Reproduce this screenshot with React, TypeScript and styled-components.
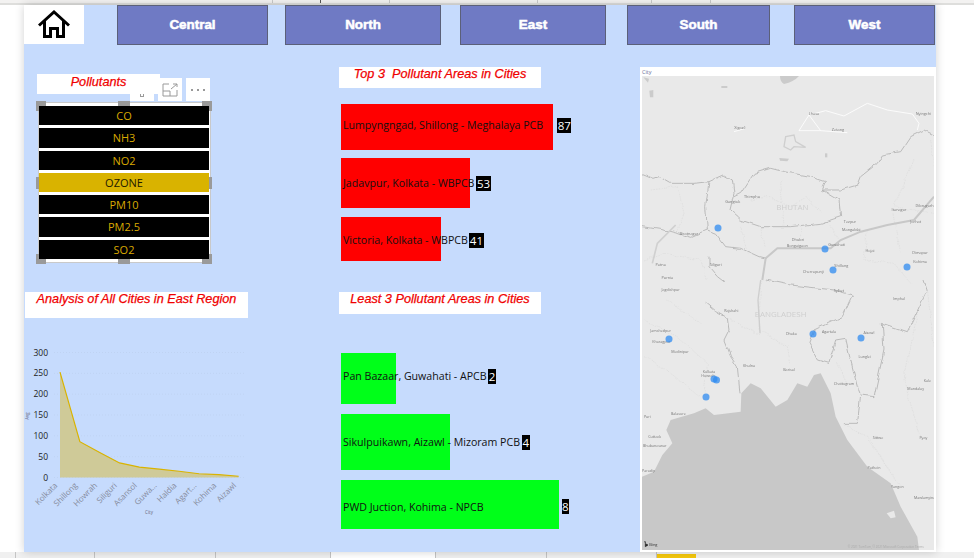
import React from "react";
import styled, { createGlobalStyle } from "styled-components";

const Global = createGlobalStyle`
  html, body { margin: 0; padding: 0; width: 974px; height: 558px; overflow: hidden; background: #fff; }
  #root { width: 974px; height: 558px; }
`;

const Shell = styled.div`
  width: 974px;
  height: 558px;
  display: flex;
  flex-direction: column;
  font-family: "Liberation Sans", Arial, sans-serif;
`;
const TopStrip = styled.div`
  height: 3px;
  flex: none;
  background: #f3f2f1;
  border-bottom: 2px solid #dededc;
  display: flex;
`;
const TopTick = styled.span<{ $w: number; $dark?: boolean }>`
  box-sizing: border-box;
  width: ${(p) => p.$w}px;
  height: 3px;
  border-right: 1px solid ${(p) => (p.$dark ? "#555" : "#c9c9c9")};
`;
const Middle = styled.div`
  height: 547px;
  flex: none;
  padding-left: 24px;
  display: flex;
`;
const Canvas = styled.main`
  position: relative;
  width: 912px;
  height: 547px;
  background: #c6dbfd;
  box-shadow: 0 0 9px rgba(0, 0, 0, 0.18);
  display: flex;
  flex-direction: column;
`;
const Nav = styled.nav`
  height: 40px;
  flex: none;
  display: flex;
  align-items: stretch;
`;
const HomeButton = styled.div`
  width: 60px;
  height: 39px;
  background: #fff;
  display: flex;
  align-items: center;
  justify-content: center;
`;
const RegionButton = styled.div<{ $w: number; $gap: number }>`
  box-sizing: border-box;
  width: ${(p) => p.$w}px;
  margin-left: ${(p) => p.$gap}px;
  background: #6f7ac4;
  border: 1px solid #5b6079;
  color: #fff;
  font-size: 13.4px;
  font-weight: 700;
  -webkit-text-stroke: 0.55px #fff;
  display: flex;
  align-items: center;
  justify-content: center;
  padding-bottom: 2px;
`;
const Content = styled.div`
  flex: 1;
  min-height: 0;
  display: flex;
`;
const LeftColumn = styled.section`
  width: 315px;
  flex: none;
  display: flex;
  flex-direction: column;
`;
const MiddleColumn = styled.section`
  width: 301px;
  flex: none;
  display: flex;
  flex-direction: column;
  padding-top: 22px;
`;
const Title = styled.div<{ $w: number; $h: number; $ml: number; $pt: number }>`
  box-sizing: border-box;
  position: relative;
  z-index: 2;
  flex: none;
  width: ${(p) => p.$w}px;
  height: ${(p) => p.$h}px;
  margin-left: ${(p) => p.$ml}px;
  padding-top: ${(p) => p.$pt}px;
  background: #fff;
  color: #f00000;
  font-size: 12.7px;
  line-height: 14px;
  font-style: italic;
  font-weight: 400;
  -webkit-text-stroke: 0.25px #f00000;
  text-align: center;
  white-space: pre;
`;
const SlicerArea = styled.div`
  position: relative;
  padding-top: 29px;
  display: flex;
  flex-direction: column;
`;
const Toolbar = styled.div`
  position: absolute;
  top: 33px;
  left: 106px;
  display: flex;
  gap: 4px;
  z-index: 1;
`;
const ToolButton = styled.div`
  width: 24px;
  height: 23px;
  background: #fff;
  display: flex;
  align-items: center;
  justify-content: center;
  color: #8d8d8d;
`;
const PinGlyph = styled.span`
  box-sizing: border-box;
  width: 4px;
  height: 4px;
  margin-top: 11px;
  border: 1px solid #9a9a9a;
  border-top: none;
`;
const Slicer = styled.div`
  position: relative;
  box-sizing: border-box;
  width: 173px;
  height: 161px;
  margin: 8px 0 0 14px;
  padding: 3px 1px 3px 0;
  background: #fff;
  border: 1px solid #c9c9c9;
  display: flex;
  flex-direction: column;
  gap: 3px;
`;
const SlicerItem = styled.div<{ $active?: boolean }>`
  position: relative;
  z-index: 1;
  height: 19.6px;
  background: ${(p) => (p.$active ? "#d9b300" : "#000")};
  color: ${(p) => (p.$active ? "#1d1a00" : "#d9a900")};
  font-family: "Open Sans", sans-serif;
  font-size: 11px;
  line-height: 19px;
  text-align: center;
`;
const Handle = styled.span<{ $x: string; $y: string; $w: number; $h: number }>`
  position: absolute;
  background: #9a9a9a;
  width: ${(p) => p.$w}px;
  height: ${(p) => p.$h}px;
  ${(p) => p.$x}
  ${(p) => p.$y}
`;
const ChartWrap = styled.div`
  margin-top: 3px;
  flex: none;
  display: block;
  line-height: 0;
`;
const BarList = styled.div<{ $mt: number }>`
  margin: ${(p) => p.$mt}px 0 0 2px;
  display: flex;
  flex-direction: column;
`;
const BarRow = styled.div<{ $h: number; $mb?: number; $shift: number }>`
  box-sizing: border-box;
  position: relative;
  height: ${(p) => p.$h}px;
  margin-bottom: ${(p) => p.$mb ?? 0}px;
  padding-top: ${(p) => Math.max(p.$shift, 0) * 2}px;
  padding-bottom: ${(p) => Math.max(-p.$shift, 0) * 2}px;
  display: flex;
  align-items: center;
`;
const BarFill = styled.div<{ $color: string }>`
  position: absolute;
  left: 0;
  top: 0;
  bottom: 0;
  background: ${(p) => p.$color};
`;
const BarLabel = styled.span`
  position: relative;
  margin-left: 2px;
  color: #111;
  font-family: "Open Sans", sans-serif;
  font-size: 10.62px;
  white-space: nowrap;
`;
const BarValue = styled.span<{ $ml: number }>`
  position: relative;
  margin-left: ${(p) => p.$ml}px;
  background: #000;
  color: #fff;
  padding: 0 0.5px;
  font-family: "Open Sans", sans-serif;
  font-size: 11.5px;
  line-height: 15px;
  height: 15px;
`;
const MapPanel = styled.section`
  box-sizing: border-box;
  width: 296px;
  height: 485px;
  margin-top: 22px;
  flex: none;
  background: #fff;
  padding: 2px;
  display: flex;
  flex-direction: column;
`;
const MapTitle = styled.div`
  height: 7px;
  flex: none;
  font-family: "Open Sans", sans-serif;
  font-size: 5.5px;
  line-height: 6px;
  color: #6a6f9a;
`;
const MapArea = styled.div`
  flex: 1;
  min-height: 0;
  line-height: 0;
`;
const BottomStrip = styled.div`
  height: 6px;
  flex: none;
  background: #f0f0f0;
  display: flex;
`;
const Tab = styled.div<{ $w: number; $active?: boolean }>`
  box-sizing: border-box;
  width: ${(p) => p.$w}px;
  height: 6px;
  border-right: 1px solid #c4c4c4;
  background: ${(p) => (p.$active ? "#fff" : "transparent")};
`;
const GoldTab = styled.div`
  width: 39px;
  height: 4px;
  margin-top: 2px;
  background: #f4c70d;
`;

const Home = () => (
  <svg width="32" height="29" viewBox="0 0 32 29" fill="none" stroke="#000" strokeWidth="3" strokeLinejoin="miter">
    <path d="M1 15.5 L16 2 L31 15.5" />
    <path d="M6.5 11 V26.5 H12.5 V18.5 H19.5 V26.5 H25.5 V11" />
  </svg>
);

const Kebab = () => (
  <svg width="16" height="4" viewBox="0 0 16 4" fill="#777">
    <circle cx="2" cy="2" r="1" />
    <circle cx="8" cy="2" r="1" />
    <circle cx="14" cy="2" r="1" />
  </svg>
);
const Focus = () => (
  <svg width="16" height="14" viewBox="0 0 16 14" fill="none" stroke="#9a9a9a" strokeWidth="1">
    <path d="M7 1 H1 V13 H15 V7" />
    <path d="M1 8 H8 V13" />
    <path d="M9 6 L15 1 M11 1 H15 V4" />
  </svg>
);

const cities = ["Kolkata", "Shillong", "Howrah", "Siliguri", "Asansol", "Guwa...", "Haldia", "Agart...", "Kohima", "Aizawl"];
const values = [253, 86, 60, 35, 25, 20, 15, 9, 7, 3];

const AreaChart = () => {
  const x = (i: number) => 36 + i * 19.85;
  const y = (v: number) => 156.5 - (v / 300) * 125;
  const line = values.map((v, i) => `${x(i)},${y(v)}`).join(" ");
  return (
    <svg width="240" height="197" viewBox="0 0 240 197">
      {[0, 50, 100, 150, 200, 250, 300].map((t) => (
        <g key={t}>
          <line x1="30" x2="222" y1={y(t)} y2={y(t)} stroke="#bfd3f3" strokeWidth="1" strokeDasharray="1 2" />
          <text x="24" y={y(t) + 3} textAnchor="end" fontSize="8.5" fill="#222" fontFamily="Open Sans, sans-serif">
            {t}
          </text>
        </g>
      ))}
      <polygon points={`${x(0)},${y(0)} ${line} ${x(9)},${y(0)}`} fill="#cfca98" />
      <polyline points={line} fill="none" stroke="#d9b300" strokeWidth="1.2" />
      {cities.map((c, i) => (
        <text
          key={c}
          x={x(i) - 2}
          y={165}
          textAnchor="end"
          fontSize="8"
          fill="#858a9b"
          fontFamily="Open Sans, sans-serif"
          transform={`rotate(-45 ${x(i) - 2} 165)`}
        >
          {c}
        </text>
      ))}
      <text x="125" y="193" textAnchor="middle" fontSize="4.5" fill="#667" fontFamily="Open Sans, sans-serif">
        City
      </text>
      <text x="5" y="95" textAnchor="middle" fontSize="4.5" fill="#667" fontFamily="Open Sans, sans-serif" transform="rotate(-90 5 95)">
        Avg
      </text>
    </svg>
  );
};

const labelsTop: [number, number, string][] = [
  [540, 344, "Lhasa"], [318, 388, "Xigazê"], [612, 393, "Zetang"], [868, 345, "Nyingchi"], [296, 608, "Gangtok"],
  [354, 593, "Thimphu"], [165, 705, "Biratnagar"], [795, 634, "Itanagar"], [872, 620, "Dibrugarh"], [845, 670, "Jorhat"],
  [648, 670, "Tezpur"], [652, 692, "Mangaldai"], [492, 724, "Dhubri"], [490, 740, "Bongaigaon"], [608, 738, "Guwahati"],
  [708, 756, "Hojai"], [622, 800, "Shillong"], [538, 820, "Cherrapunji"], [858, 763, "Dimapur"], [858, 790, "Kohima"],
  [80, 797, "Patna"], [245, 798, "Siliguri"], [100, 836, "Purnia"],
];
const labelsBottom: [number, number, string][] = [
  [110, 34, "Jagdishpur"], [292, 95, "Rajshahi"], [615, 36, "Sylhet"], [795, 61, "Imphal"], [80, 157, "Jamshedpur"],
  [82, 190, "Kharagpur"], [138, 220, "Medinipur"], [225, 278, "Kolkata"], [222, 291, "Howrah"], [345, 262, "Khulna"],
  [472, 165, "Dhaka"], [465, 274, "Barisal"], [585, 160, "Agartala"], [705, 163, "Aizawl"], [692, 235, "Lunglei"],
  [630, 315, "Chattogram"], [845, 331, "Mandalay"], [880, 305, "Kale"], [40, 413, "Puri"], [133, 405, "Balasore"],
  [62, 473, "Cuttack"], [62, 500, "Bhubaneswar"], [732, 476, "Sittwe"], [868, 476, "Pyay"], [720, 568, "Pathein"],
  [790, 624, "Yangon"], [872, 656, "Mawlamyine"], [44, 577, "Paradip"],
];

const MapDrawing = () => (
  <svg width="292" height="474" viewBox="642 76 292 474" style={{ display: "block" }}>
    <defs>
      <filter id="soft" x="0" y="0" width="100%" height="100%">
        <feGaussianBlur stdDeviation="0.45" />
      </filter>
      <filter id="wiggle" x="-5%" y="-5%" width="110%" height="110%">
        <feTurbulence type="fractalNoise" baseFrequency="0.035" numOctaves="2" seed="4" result="n" />
        <feDisplacementMap in="SourceGraphic" in2="n" scale="14" xChannelSelector="R" yChannelSelector="G" />
      </filter>
    </defs>
    <g filter="url(#soft)">
      <rect x="642" y="76" width="292" height="474" fill="#e9e9e9" />
      <g transform="translate(634 0) scale(0.33333)">
        <g fill="#cbcbcb">
          <path d="M438 228 H495 Q480 245 450 252 Q438 245 438 228 Z" />
          <path d="M46 272 L58 270 L58 292 L48 292 Z" />
          <path d="M262 258 H280 V264 H262 Z" />
          <path d="M28 232 L45 236 L42 248 Z" />
          <path d="M436 474 L465 476 L460 484 L438 482 Z" />
          <path d="M573 460 H580 V472 H573 Z" />
        </g>
        <path d="M455 410 L480 405 L485 425 L515 442 L480 440 L470 450 L450 440 Z" fill="none" stroke="#cfcfcf" strokeWidth="4" />
        <path d="M300 395 L335 385 M495 392 L525 345 L575 332 L630 348 L700 310 L760 330 L835 342 L855 370 L850 390 M525 345 L560 392 L495 392 M560 392 L640 398" fill="none" stroke="#fff" strokeWidth="2.5" />
        <g filter="url(#wiggle)">
          <g fill="none" stroke="#b2b2b2" strokeWidth="2.6">
            <path d="M24 520 L60 535 L75 530 L110 550 L180 550 L225 545 L270 525 L295 540 L300 580 L288 630 L320 660 L380 680 L470 680 L560 670 L620 650 L615 600 L565 570 L575 545 L530 530 L450 515 L410 505 L360 520 L320 580 L300 590" />
            <path d="M565 570 L620 570 L670 555 L680 530 L730 490 L745 465 L800 455 L830 410 L870 390 L900 405" />
            <path d="M225 545 L215 620 L220 690 L170 712 L130 700 L90 690 L24 680" />
            <path d="M220 690 L245 700 L275 740 L320 745 L375 770 L395 775" />
            <path d="M225 770 L225 800 L250 830 L270 845" />
          </g>
          <g fill="none" stroke="#d6d6d6" strokeWidth="1.4" strokeDasharray="5 3">
            <path d="M50 570 L130 560 L150 640 L130 700 M350 600 L400 590 L470 620 L520 590 L560 640 M440 540 L450 680 M500 680 L500 720 M590 670 L610 720 M700 690 L690 780 L780 790 L830 850 M780 640 L800 760 M840 480 L780 620 L900 640 M890 420 L900 500 M320 680 L340 760 M380 680 L390 740 M30 780 L90 760 L200 780 L220 840" />
          </g>
        </g>
        <path d="M900 590 L840 660 L760 675 L680 695 L620 720 L590 745 L500 745 L430 745 L395 775 L385 840" fill="none" stroke="#c8c8c8" strokeWidth="6" />
        <path d="M125 675 L70 730 L55 790" fill="none" stroke="#d0d0d0" strokeWidth="5" />
        {labelsTop.map(([x, y, t]) => (
          <text key={t} x={x} y={y} textAnchor="middle" fontSize="11.5" fill="#777" fontFamily="Open Sans, sans-serif">
            {t}
          </text>
        ))}
        <text x="475" y="630" textAnchor="middle" fontSize="24" fill="#cfcfcf" fontFamily="Open Sans, sans-serif">
          BHUTAN
        </text>
      </g>
      <g transform="translate(634 280) scale(0.33333)">
        <path d="M24 590 L60 575 L85 525 L115 490 L97 450 L110 420 L180 400 L215 385 L240 405 L320 395 L322 340 L350 310 L380 325 L425 380 L460 360 L490 310 L520 320 L540 285 L560 280 L590 340 L605 410 L640 480 L700 560 L770 610 L800 680 L850 770 L855 810 L24 810 Z" fill="#c8c8c8" />
        <path d="M758 700 L780 692 L785 712 L770 715 Z" fill="#e9e9e9" />
        <g filter="url(#wiggle)">
          <g fill="none" stroke="#b2b2b2" strokeWidth="2.6">
            <path d="M215 70 L245 95 L280 115 L285 150 L270 180 L290 230 L310 260 L318 340" />
            <path d="M395 0 L470 15 L600 30 L655 45 L625 110 L540 150 L525 190 L550 240 L585 250 L605 180 L635 175 L650 240 L670 320 L680 345 L670 430 L630 430" />
            <path d="M745 130 L750 210 L720 350 L680 345" />
            <path d="M745 130 L820 155 L880 30 L870 0" />
          </g>
          <g fill="none" stroke="#d6d6d6" strokeWidth="1.4" strokeDasharray="5 3">
            <path d="M380 0 L375 150 L460 200 L470 250 M280 115 L380 165 M610 250 L640 310 M30 120 L130 170 L220 250 L210 340 M30 230 L110 280 L200 350 M100 60 L200 130 M850 100 L810 300 L860 480 M700 480 L760 560 M625 430 L700 470 L800 620 M880 30 L900 200" />
          </g>
        </g>
        <path d="M380 0 L372 60 L378 160" fill="none" stroke="#cecece" strokeWidth="4" />
        {labelsBottom.map(([x, y, t]) => (
          <text key={t} x={x} y={y} textAnchor="middle" fontSize="11" fill="#777" fontFamily="Open Sans, sans-serif">
            {t}
          </text>
        ))}
        <text x="440" y="110" textAnchor="middle" fontSize="24" fill="#cfcfcf" fontFamily="Open Sans, sans-serif">
          BANGLADESH
        </text>
        <path d="M31 785 H34 V800 L42 795 L36 792" fill="#222" stroke="#222" strokeWidth="2" />
        <text x="46" y="797" fontSize="12" fill="#333" fontFamily="Open Sans, sans-serif">
          Bing
        </text>
        <text x="755" y="804" textAnchor="middle" fontSize="9" fill="#aaa" fontFamily="Open Sans, sans-serif">
          © 2021 TomTom, © 2021 Microsoft Corporation Terms
        </text>
      </g>
    </g>
    {[
      [718, 228], [825, 249], [833, 270], [907, 267], [669, 339], [714, 379], [716.5, 380], [706, 397], [813, 334], [861, 338],
    ].map(([cx, cy]) => (
      <circle key={`${cx}-${cy}`} cx={cx} cy={cy} r="3.5" fill="#2f8bf0" fillOpacity="0.75" />
    ))}
  </svg>
);

const pollutants = ["CO", "NH3", "NO2", "OZONE", "PM10", "PM2.5", "SO2"];

const regions: [string, number, number][] = [
  ["Central", 151, 33],
  ["North", 156, 17],
  ["East", 146, 19],
  ["South", 143, 21],
  ["West", 141, 24],
];

const top3 = [
  { label: "Lumpyngngad, Shillong - Meghalaya PCB", value: "87", w: 212, h: 46, ml: 14, mb: 8, shift: -2 },
  { label: "Jadavpur, Kolkata - WBPCB", value: "53", w: 129, h: 50, ml: 2, mb: 9, shift: 0 },
  { label: "Victoria, Kolkata - WBPCB", value: "41", w: 100, h: 44, ml: 1.5, mb: 0, shift: 1 },
];
const least3 = [
  { label: "Pan Bazaar, Guwahati - APCB", value: "2", w: 55, h: 51, ml: 1.5, mb: 10, shift: -2.5 },
  { label: "Sikulpuikawn, Aizawl - Mizoram PCB", value: "4", w: 109, h: 56, ml: 2, mb: 10, shift: 0 },
  { label: "PWD Juction, Kohima - NPCB", value: "8", w: 218, h: 49, ml: 78, mb: 0, shift: 2 },
];

const Bars = ({ items, color }: { items: typeof top3; color: string }) => (
  <>
    {items.map((b) => (
      <BarRow key={b.label} $h={b.h} $mb={b.mb} $shift={b.shift}>
        <BarFill $color={color} style={{ width: b.w }} />
        <BarLabel>{b.label}</BarLabel>
        <BarValue $ml={b.ml}>{b.value}</BarValue>
      </BarRow>
    ))}
  </>
);

export default function App() {
  return (
    <Shell>
      <Global />
      <TopStrip>
        <TopTick $w={273} />
        <TopTick $w={48} $dark />
        <TopTick $w={69} />
        <TopTick $w={148} />
        <TopTick $w={114} />
        <TopTick $w={59} />
      </TopStrip>
      <Middle>
        <Canvas>
          <Nav>
            <HomeButton>
              <Home />
            </HomeButton>
            {regions.map(([name, w, gap]) => (
              <RegionButton key={name} $w={w} $gap={gap}>
                {name}
              </RegionButton>
            ))}
          </Nav>
          <Content>
            <LeftColumn>
              <SlicerArea>
                <Title $w={123} $h={20} $ml={13} $pt={1}>
                  Pollutants
                </Title>
                <Toolbar>
                  <ToolButton>
                    <PinGlyph />
                  </ToolButton>
                  <ToolButton>
                    <Focus />
                  </ToolButton>
                  <ToolButton>
                    <Kebab />
                  </ToolButton>
                </Toolbar>
                <Slicer>
                  {pollutants.map((p) => (
                    <SlicerItem key={p} $active={p === "OZONE"}>
                      {p}
                    </SlicerItem>
                  ))}
                  <Handle $x="left:-3px;" $y="top:-2px;" $w={10} $h={10} />
                  <Handle $x="left:79px;" $y="top:-2px;" $w={12} $h={5} />
                  <Handle $x="right:-2px;" $y="top:-2px;" $w={10} $h={10} />
                  <Handle $x="left:-3px;" $y="top:74px;" $w={4} $h={12} />
                  <Handle $x="right:-2px;" $y="top:74px;" $w={4} $h={12} />
                  <Handle $x="left:-3px;" $y="bottom:-2px;" $w={10} $h={10} />
                  <Handle $x="left:79px;" $y="bottom:-2px;" $w={12} $h={5} />
                  <Handle $x="right:-2px;" $y="bottom:-2px;" $w={10} $h={10} />
                </Slicer>
              </SlicerArea>
              <Title $w={223} $h={26} $ml={1} $pt={0} style={{ marginTop: 29 }}>
                Analysis of All Cities in East Region
              </Title>
              <ChartWrap>
                <AreaChart />
              </ChartWrap>
            </LeftColumn>
            <MiddleColumn>
              <Title $w={202} $h={21} $ml={0} $pt={0}>
                {"Top 3  Pollutant Areas in Cities"}
              </Title>
              <BarList $mt={16}>
                <Bars items={top3} color="#ff0000" />
              </BarList>
              <Title $w={202} $h={22} $ml={0} $pt={0} style={{ marginTop: 31 }}>
                Least 3 Pollutant Areas in Cities
              </Title>
              <BarList $mt={39}>
                <Bars items={least3} color="#00ff19" />
              </BarList>
            </MiddleColumn>
            <MapPanel>
              <MapTitle>City</MapTitle>
              <MapArea>
                <MapDrawing />
              </MapArea>
            </MapPanel>
          </Content>
        </Canvas>
      </Middle>
      <BottomStrip>
        <Tab $w={16} />
        <Tab $w={79} />
        <Tab $w={121} />
        <Tab $w={115} />
        <Tab $w={105} $active />
        <Tab $w={111} />
        <Tab $w={110} />
        <GoldTab />
      </BottomStrip>
    </Shell>
  );
}
